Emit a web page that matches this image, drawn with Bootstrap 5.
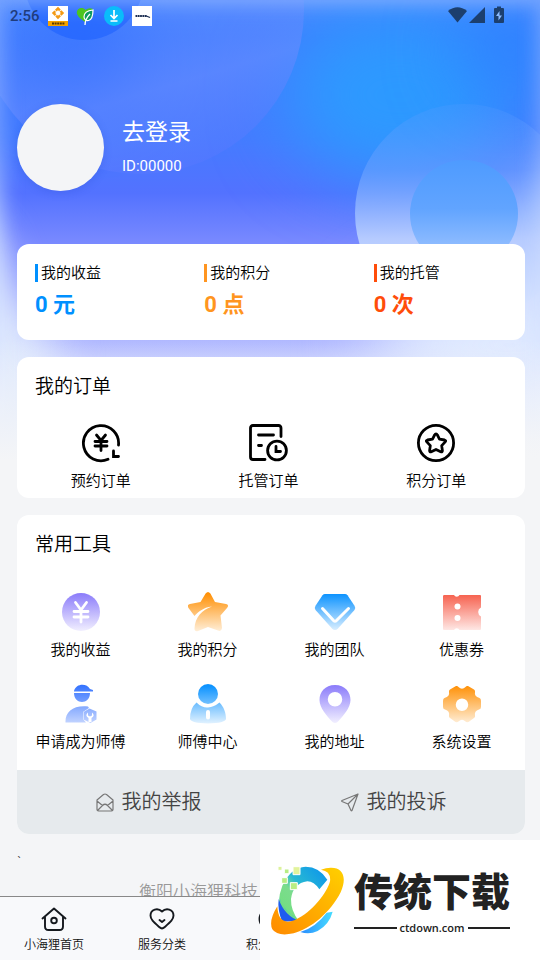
<!DOCTYPE html>
<html lang="zh-CN">
<head>
<meta charset="utf-8">
<meta name="viewport" content="width=device-width, initial-scale=1">
<title>我的</title>
<link rel="stylesheet" href="https://cdn.jsdelivr.net/npm/bootstrap@5.3.0/dist/css/bootstrap.min.css">
<style>
body{font-family:Roboto,"Noto Sans CJK SC",sans-serif;font-weight:350;background:#f4f5f7;color:#000;font-size:15px;line-height:22px}
a{color:inherit;text-decoration:none}
svg{display:block;flex:none}
.backdrop{top:0;left:0;width:100%;height:460px;z-index:-1}
.backdrop filter{color-interpolation-filters:sRGB}
.statusbar{height:32px;padding:0 34px 0 10px;color:#1d3d6b}
.clock{font-size:15px;font-weight:500;color:#1f3c7c;width:30px}
.apps{gap:8px}
.page{padding:0 15px 0 17px}
.profile{padding:72px 0 53px;gap:18px;color:#fff}
.avatar{width:87px;height:87px;background:#f4f5f7;box-shadow:0 2px 8px #2040c033}
.login{font-size:23px;line-height:32px;font-weight:400}
.uid{font-weight:400;margin:6px 0 2px}
.panel{background:#fff;border-radius:12px;overflow:hidden;margin-bottom:17px}
.stat{padding:20px 18px 19px}
.stat-name{border-left:3px solid;padding-left:3px;line-height:18px}
.stat-name span{color:#000}
.stat-value{font-size:22px;line-height:32px;font-weight:700;margin-top:7px}
.c-blue{color:#0090ff}.c-amber{color:#ff9520}.c-red{color:#ff4d0a}
.panel-title{font-size:19px;line-height:28px;font-weight:350;margin:0;padding:16px 18px 0}
.orders{padding:22px 5px 6px 0}
.entry{gap:7px}
.tools{padding:33px 0 17px;row-gap:23px}
.reports{background:#e6eaed;height:64px;color:#444;font-size:20px;padding:0 9px}
.reports a{gap:8px}
.tick{color:#333}
.credit{margin-top:7px;padding-left:122px;font-size:17px;color:#999;line-height:24px}
.tabs{height:64px;background:#f8f9fb;border-top:1px solid #888;color:#111}
.tabs a{width:20%;font-size:12px;line-height:18px;padding-top:9px;gap:4px}
.stamp{right:0;bottom:0;width:280px;height:120px;background:#fff;z-index:1040;padding:0 30px 0 9px;gap:8px;color:#222}
.stamp-name{font-family:"Noto Sans CJK SC",sans-serif;font-size:39px;line-height:48px;font-weight:900;white-space:nowrap}
.stamp-site{font-family:"Open Sans",sans-serif;font-size:11px;line-height:14px;font-weight:600;gap:3px;margin-top:8px}
.stamp-site i{height:2px;flex:1;background:#222}
</style>
<script src="https://cdn.jsdelivr.net/npm/bootstrap@5.3.0/dist/js/bootstrap.bundle.min.js" defer></script>
</head>
<body>
<svg class="backdrop position-absolute" viewBox="0 0 540 460" preserveAspectRatio="none" aria-hidden="true">
<defs>
<linearGradient id="base" x2="0" y2="1"><stop offset="0" stop-color="#4a8aff"/><stop offset=".08" stop-color="#3f7fff"/><stop offset=".3" stop-color="#457bff"/><stop offset=".42" stop-color="#5372ff"/><stop offset=".53" stop-color="#7a8aff"/><stop offset=".75" stop-color="#b3bbff"/><stop offset=".86" stop-color="#e3e9ff"/><stop offset="1" stop-color="#f4f5f7"/></linearGradient>
<linearGradient id="ring" x2="0" y2="1"><stop offset="0" stop-color="#5c9cff" stop-opacity=".2"/><stop offset=".3" stop-color="#6ea4ff" stop-opacity=".55"/><stop offset=".62" stop-color="#b6cbff"/><stop offset="1" stop-color="#dbe7ff"/></linearGradient>
<linearGradient id="core" x2="0" y2="1"><stop offset="0" stop-color="#4e9bff"/><stop offset=".45" stop-color="#61a4ff"/><stop offset=".8" stop-color="#8fbcff"/><stop offset="1" stop-color="#b5d2ff"/></linearGradient>
<linearGradient id="disc" x1=".3" y1="0" x2=".6" y2="1"><stop offset=".3" stop-color="#4f80ff" stop-opacity=".1"/><stop offset=".75" stop-color="#6c8cff" stop-opacity=".55"/><stop offset="1" stop-color="#5b78ff" stop-opacity=".35"/></linearGradient>
<linearGradient id="side" x2="0" y2="1"><stop offset="0" stop-color="#9cbcff" stop-opacity=".6"/><stop offset=".35" stop-color="#8fb0ff" stop-opacity=".7"/><stop offset=".6" stop-color="#c8d8ff"/><stop offset="1" stop-color="#e6eeff"/></linearGradient>
<linearGradient id="fade" x2="0" y2="1"><stop offset="0" stop-color="#f4f5f7" stop-opacity="0"/><stop offset="1" stop-color="#f4f5f7"/></linearGradient>
<filter id="b30" x="-150%" y="-150%" width="400%" height="400%"><feGaussianBlur stdDeviation="36"/></filter>
<filter id="b9" x="-200%" y="-200%" width="500%" height="500%"><feGaussianBlur stdDeviation="10"/></filter>
<filter id="b20" x="-200%" y="-100%" width="500%" height="300%"><feGaussianBlur stdDeviation="22"/></filter>
</defs>
<rect width="540" height="460" fill="url(#base)"/>
<ellipse cx="400" cy="95" rx="115" ry="85" fill="#2d9aff" filter="url(#b30)"/>
<ellipse cx="510" cy="50" rx="50" ry="40" fill="#2a84ff" filter="url(#b30)"/>
<ellipse cx="80" cy="60" rx="60" ry="45" fill="#1f66ff" opacity=".9" filter="url(#b30)"/>
<circle cx="140" cy="10" r="164" fill="url(#disc)"/>
<circle cx="84" cy="-20" r="60" fill="#165cff" opacity=".5"/>
<ellipse cx="510" cy="345" rx="140" ry="80" fill="#e0eaff" filter="url(#b30)"/>
<ellipse cx="550" cy="260" rx="24" ry="90" fill="#d5e3ff" filter="url(#b20)"/>
<circle cx="464" cy="213" r="109" fill="url(#ring)"/>
<circle cx="464" cy="214" r="54" fill="url(#core)"/>
<path d="M-60 230H-14Q0 270 16 305L60 350V500H-60Z" fill="#dfe9fd" filter="url(#b20)"/>
<rect x="-28" y="-20" width="30" height="440" fill="url(#side)" filter="url(#b9)"/>
<rect x="538" y="-20" width="26" height="440" fill="url(#side)" filter="url(#b9)"/>
<rect y="-16" width="540" height="18" fill="#9dbcff" opacity=".8" filter="url(#b9)"/>
<rect y="340" width="540" height="120" fill="url(#fade)"/>
</svg>

<header class="statusbar d-flex align-items-center justify-content-between">
<div class="d-flex align-items-center apps">
<span class="clock">2:56</span>
<svg width="20" height="20" viewBox="0 0 20 20"><path fill="#fff" d="M0 0h20v20H0z"/><path fill="#f5a300" d="M0 15h20v5H0z"/><path d="M10 2.500L14.500 7 10 11.500 5.500 7z" fill="none" stroke="#f39a14" stroke-width="2.400" stroke-dasharray="5.500 .8" stroke-dashoffset="2.800"/><path d="M4 17.500h13" stroke="#5b3b00" stroke-width="2" stroke-dasharray="2 .6"/></svg>
<svg width="20" height="20" viewBox="0 0 20 20"><path fill="#4cc420" d="M9 16Q0 10 .8 6C1.500 1.500 7 1 9.500 4Q13 1 17 3L12 14z"/><path fill="#0c9a60" stroke="#fff" stroke-width="1.200" d="M17 4C11 4.500 8 7 8 11c.3 3 2.500 4 4.500 3.500 4-1 4.500-5.500 4.500-10.500z"/><path d="M9 19C9 14 11 11 14 8" fill="none" stroke="#fff" stroke-width="1.300"/></svg>
<svg width="20" height="20" viewBox="0 0 20 20"><circle cx="10" cy="10" r="10" fill="#0abcfa"/><path d="M10 4v8M6.500 9l3.500 3.500L13.500 9M6.500 15h7" fill="none" stroke="#fff" stroke-width="1.700"/></svg>
<svg width="20" height="20" viewBox="0 0 20 20"><path fill="#fff" d="M0 0h20v20H0z"/><path d="M3.500 10h11" stroke="#1c2e52" stroke-width="2" stroke-dasharray="1.800 .5"/><path d="M13 9.500l5 2" stroke="#1c2e52" stroke-width="1.200"/></svg>
</div>
<svg width="58" height="20" viewBox="0 0 58 20" fill="#1c3f6e"><path d="M0 5Q9.500-2.500 19 5L9.500 16.500z"/><path d="M37 1v16H21z"/><path d="M49 2V.500h4V2h2q1 0 1 1v13q0 1-1 1h-8q-1 0-1-1V3q0-1 1-1z"/><path fill="#8cbcff" d="M51.500 5L48 10h2.500v4.500L54 9.500h-2.500z"/></svg>
</header>

<main class="page">
<section class="profile d-flex align-items-center">
<div class="avatar rounded-circle"></div>
<div><a href="#" class="login d-block">去登录</a><div class="uid">ID:00000</div></div>
</section>

<section class="panel">
<div class="row g-0">
<div class="col-4 stat"><div class="stat-name c-blue"><span>我的收益</span></div><div class="stat-value c-blue">0 元</div></div>
<div class="col-4 stat"><div class="stat-name c-amber"><span>我的积分</span></div><div class="stat-value c-amber">0 点</div></div>
<div class="col-4 stat"><div class="stat-name c-red"><span>我的托管</span></div><div class="stat-value c-red">0 次</div></div>
</div>
</section>

<section class="panel">
<h2 class="panel-title">我的订单</h2>
<div class="row g-0 orders text-center">
<a href="#" class="col-4 entry d-flex flex-column align-items-center">
<svg width="40" height="40" viewBox="0 0 40 40" fill="none" stroke="#000" stroke-width="2.800" stroke-linecap="round"><path d="M37.500 22A17.600 17.600 0 1 0 27 36.300"/><path d="M15.500 12l4.500 5.500 4.500-5.500M14 18.500h12M14 23h12M20 18v9.500"/><path d="M32.500 28v5.500h5"/></svg>
<span>预约订单</span></a>
<a href="#" class="col-4 entry d-flex flex-column align-items-center">
<svg width="40" height="40" viewBox="0 0 40 40" fill="none" stroke="#000" stroke-width="2.800" stroke-linecap="round"><path d="M33 13.500V5q0-2.500-2.500-2.500H5Q2.500 2.500 2.500 5v29q0 2.500 2.500 2.500h12M10.500 12h15M10.500 22.500h3"/><circle cx="29" cy="27.500" r="9.400"/><path d="M28 23.500v5h4.500"/></svg>
<span>托管订单</span></a>
<a href="#" class="col-4 entry d-flex flex-column align-items-center">
<svg width="40" height="40" viewBox="0 0 40 40" fill="none" stroke="#000" stroke-width="2.800" stroke-linejoin="round"><circle cx="20" cy="20" r="17.600"/><path d="M20 10.800q.8 0 1.200.9l2.300 4.500 5.100.8q1.800.5.600 1.900l-3.500 3.700.7 5q0 1.800-1.700 1.100L20 26.500l-4.700 2.200q-1.700.7-1.700-1.100l.7-5-3.500-3.700q-1.200-1.400.6-1.900l5.100-.8 2.300-4.500q.4-.9 1.200-.9z"/></svg>
<span>积分订单</span></a>
</div>
</section>

<section class="panel">
<h2 class="panel-title">常用工具</h2>
<svg width="0" height="0" class="position-absolute" aria-hidden="true"><defs>
<linearGradient id="gp" gradientUnits="userSpaceOnUse" x1="0" y1="0" x2="0" y2="40"><stop stop-color="#8878fa"/><stop offset="1" stop-color="#f4f2ff"/></linearGradient>
<linearGradient id="go" gradientUnits="userSpaceOnUse" x1="0" y1="2" x2="0" y2="40"><stop stop-color="#ff9108"/><stop offset="1" stop-color="#fff0dc"/></linearGradient>
<linearGradient id="gb" gradientUnits="userSpaceOnUse" x1="0" y1="2" x2="0" y2="40"><stop stop-color="#0d93ff"/><stop offset="1" stop-color="#e4f3ff"/></linearGradient>
<linearGradient id="gr" gradientUnits="userSpaceOnUse" x1="0" y1="2" x2="0" y2="40"><stop stop-color="#f65f4c"/><stop offset="1" stop-color="#ffefed"/></linearGradient>
<linearGradient id="gw" gradientUnits="userSpaceOnUse" x1="0" y1="0" x2="0" y2="40"><stop stop-color="#3070ff"/><stop offset="1" stop-color="#c6d6ff"/></linearGradient>
</defs></svg>
<div class="row g-0 tools text-center">
<a href="#" class="col-3 entry d-flex flex-column align-items-center">
<svg width="40" height="40" viewBox="0 0 40 40"><circle cx="20" cy="20" r="19" fill="url(#gp)"/><path d="M14.500 10.500L20 18l5.500-7.500M13 19.500h14M13 25h14M20 19v11" fill="none" stroke="#fff" stroke-width="2.800" stroke-linecap="round"/></svg>
<span>我的收益</span></a>
<a href="#" class="col-3 entry d-flex flex-column align-items-center">
<svg width="40" height="40" viewBox="0 0 40 40"><path fill="url(#go)" d="M17.600 1.500Q20-1.500 22.400 1.500L27 10l11 2q3.500 1 1 4l-6.500 7.500L34 36q-.5 4-4 2.500L20 35l-10 4q-3.500 1-3.500-2.500C7 25 14 18 24 14.500 15 15.500 10 20 6.500 24L.500 16q-2-3 1.500-4l10.500-2z"/></svg>
<span>我的积分</span></a>
<a href="#" class="col-3 entry d-flex flex-column align-items-center">
<svg width="42" height="40" viewBox="0 0 42 40"><path fill="url(#gb)" d="M11 2h20q1.500 0 2.500 1.200l7 10.500q1.500 2.300 0 4.300L24 36.500q-3 3-6 0L1.500 18Q0 16 1.500 13.700l7-10.500Q9.500 2 11 2z"/><path d="M8.500 16.500l11 12q1.500 1.500 3 0l12-12" fill="none" stroke="#fff" stroke-width="3" stroke-linecap="round"/></svg>
<span>我的团队</span></a>
<a href="#" class="col-3 entry d-flex flex-column align-items-center">
<svg width="40" height="40" viewBox="0 0 40 40"><path fill="url(#gr)" d="M2.500 3H12a3 3 0 0 0 5.500 0H38q1 0 1 1v11.500a5 5 0 0 0 0 9V37q0 1-1 1H17.500a3 3 0 0 0-5.500 0H2q-1 0-1-1V4q0-1 1.500-1z"/><circle cx="15.500" cy="14.500" r="3" fill="#fff"/><circle cx="15.500" cy="26" r="3" fill="#fff"/></svg>
<span>优惠券</span></a>
<a href="#" class="col-3 entry d-flex flex-column align-items-center">
<svg width="40" height="40" viewBox="0 0 40 40" fill="url(#gw)"><path d="M13 7C15-1 26-1 29 5l3 1v1.500H13zM13 9h16C29 21 13 21 13 9zM4.500 38.500C4 28 12 21 27 22.500L28 24l-6 4v7l3 3.500z"/><path fill-rule="evenodd" d="M22.500 28l6-3.500 7 3v8l-6 3.500-7-3.500zM27 28.500q-3.500 3 .5 5.500v4h3v-4q4-2.500.5-5.500v3l-2 1-2-1z"/></svg>
<span>申请成为师傅</span></a>
<a href="#" class="col-3 entry d-flex flex-column align-items-center">
<svg width="40" height="40" viewBox="0 0 40 40"><circle cx="20" cy="10" r="10" fill="url(#gb)"/><path fill="url(#gb)" fill-rule="evenodd" d="M8.500 18.500Q14 24 20 23.500T31.500 18.500C36 23 38 29 38 35Q37 39 20 39.500 3 39 2 35 2 24 8.500 18.500zM20 26q-2 0-2 2v5.500q0 2 2 2t2-2V28q0-2-2-2z"/></svg>
<span>师傅中心</span></a>
<a href="#" class="col-3 entry d-flex flex-column align-items-center">
<svg width="40" height="40" viewBox="0 0 40 40"><path fill="url(#gp)" fill-rule="evenodd" d="M20 1C10 1 4.500 8 4.500 16 4.500 24 12 32 17.500 38q2.500 2 5 0C28 32 35.500 24 35.500 16 35.500 8 30 1 20 1zM20 8a7 7 0 1 1 0 14.500A7 7 0 0 1 20 8z"/></svg>
<span>我的地址</span></a>
<a href="#" class="col-3 entry d-flex flex-column align-items-center">
<svg width="40" height="40" viewBox="0 0 40 40"><path fill="url(#go)" fill-rule="evenodd" d="M8 5.500l6-3.500q1.500-.5 2.500 1 3.500 3.500 7 0 1-1.500 2.500-1l6 3.500q1.500 1 1 2.500-1 4.500 4.500 6 1.500.5 1.500 3v6q0 2-2 2.500-5 1.500-4 6 .5 1.500-1 2.500l-5.500 4q-2 .5-3-.5-3.500-3.500-7 0-1 1-3 .5L8 34q-1.500-1-1-2.500 1-4.500-4-6-2-.5-2-2.500v-6q0-2.500 1.500-3Q8 12.500 7 8q-.5-1.500 1-2.500zM20 14.500a6 6 0 1 0 0 12.500 6 6 0 0 0 0-12.500z"/></svg>
<span>系统设置</span></a>
</div>
<div class="reports d-flex">
<a href="#" class="col-6 d-flex align-items-center justify-content-center">
<svg width="18" height="19" viewBox="0 0 18 19" fill="none" stroke="#777" stroke-width="1.200" stroke-linejoin="round"><path d="M1 7l6.500-5.500q1.500-1 3 0L17 7v9.500q0 1.500-1.500 1.500h-13Q1 18 1 16.500zM1 8l5.500 4.500M17 8l-5.500 4.500M1.500 17.500L6.500 12.500Q9 10 11.500 12.500l5 5"/></svg>
<span>我的举报</span></a>
<a href="#" class="col-6 d-flex align-items-center justify-content-center">
<svg width="18" height="19" viewBox="0 0 18 19" fill="none" stroke="#777" stroke-width="1.200" stroke-linejoin="round"><path d="M17 1L1 7.500q-.5.500 0 1L7 11l3 6.500q.5.500 1 0zL7 11"/></svg>
<span>我的投诉</span></a>
</div>
</section>
<p class="tick mb-0">`</p>
<footer class="credit">衡阳小海狸科技</footer>
</main>

<nav class="tabs fixed-bottom d-flex">
<a href="#" class="d-flex flex-column align-items-center"><svg width="26" height="26" viewBox="0 0 26 26" fill="none" stroke="#15191e" stroke-width="1.900" stroke-linecap="round" stroke-linejoin="round"><path d="M1.500 12.500L13 2.500l11.500 10M4 11v9.500Q4 24 7.500 24h11q3.500 0 3.500-3.500V11"/><circle cx="13" cy="14.500" r="2.800"/></svg><span>小海狸首页</span></a>
<a href="#" class="d-flex flex-column align-items-center"><svg width="26" height="26" viewBox="0 0 26 26" fill="none" stroke="#15191e" stroke-width="1.900" stroke-linecap="round" stroke-linejoin="round"><path d="M13 5.500C9 1.500 1.500 3 1.500 9.500c0 4 3 6.500 9 11.800q2.500 2.200 5 0c6-5.300 9-7.800 9-11.800C24.500 3 17 1.500 13 5.500zM10.500 14l2.500 2 2.500-2"/></svg><span>服务分类</span></a>
<a href="#" class="d-flex flex-column align-items-center"><svg width="26" height="26" viewBox="0 0 26 26" fill="none" stroke="#15191e" stroke-width="1.900"><circle cx="13" cy="13" r="10.500"/></svg><span>积分商城</span></a>
</nav>

<aside class="stamp position-fixed d-flex align-items-center">
<svg width="77" height="73" viewBox="40 100 231 219">
<defs><linearGradient id="lc" x1="1" y1="0" x2="0" y2="1"><stop stop-color="#0a91ee"/><stop offset=".45" stop-color="#28b9d3"/><stop offset=".6" stop-color="#7bdc8d"/><stop offset="1" stop-color="#6fe07a"/></linearGradient><linearGradient id="lo" x1="1" y1="0" x2="0" y2="1"><stop stop-color="#ffd000"/><stop offset="1" stop-color="#ff8a00"/></linearGradient><linearGradient id="lb"><stop stop-color="#2a8cff"/><stop offset="1" stop-color="#46dcff"/></linearGradient></defs>
<path fill="url(#lc)" d="M215 147Q190 108 150 108 105 110 80 165 60 215 78 268L130 272Q105 240 106 205 112 158 155 152q20 0 36 24z"/>
<path fill="#1f5cf0" d="M69 205q-4 35 11 68l52-2q-45-15-63-66z"/><path fill="#2bb0ee" d="M70 196q10 45 52 66-26-12-47-48z"/>
<path fill="url(#lb)" d="M134 304Q180 290 213 246l18-3q-10 38-45 58-25 12-52 3z"/>
<path fill="url(#lo)" d="M65 227Q38 270 50 296q15 22 64 12C165 295 225 245 255 185c20-45 7-75-30-74q-14 0-29 6 31 5 27 35C215 185 170 245 118 268q-50 20-53-41z"/>
<g fill="#b8ed83" stroke="#fff" stroke-width="3"><path d="M112 108h21v24h-21z" fill="#e2f39b"/><path d="M78 141h17v17H78zM86 115h14v14H86zM104 156h21v21h-21z"/><path d="M67 107h12v12H67z" fill="#dcf29b"/></g></svg>
<div class="flex-fill"><div class="stamp-name">传统下载</div><div class="stamp-site d-flex align-items-center"><i></i>ctdown.com<i></i></div></div>
</aside>
</body>
</html>
